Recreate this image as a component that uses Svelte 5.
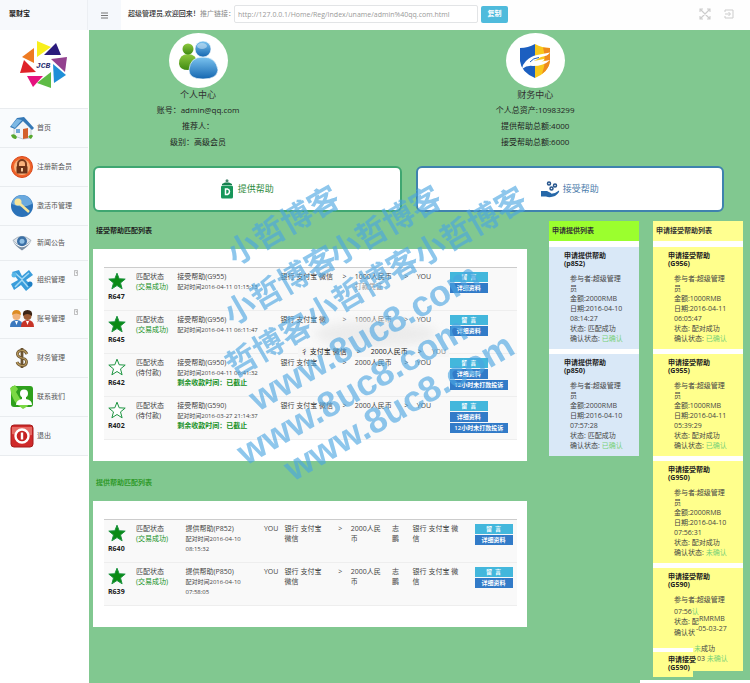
<script>
  const nav = [
    { id: 'home', label: '首页' },
    { id: 'lock', label: '注册新会员' },
    { id: 'key', label: '激活币管理' },
    { id: 'news', label: '新闻公告', short: true },
    { id: 'team', label: '组织管理', more: true },
    { id: 'users', label: '账号管理', more: true },
    { id: 'money', label: '财务管理' },
    { id: 'contact', label: '联系我们' },
    { id: 'exit', label: '退出' }
  ];

  const received = [
    { id: 'R647', done: true, code: 'G955', time: '2016-04-11 01:15:13', bank: '银行 支付宝 微信', amount: '1000人民币', proof: '打款凭证' },
    { id: 'R645', done: true, code: 'G956', time: '2016-04-11 06:11:47', bank: '银行 支付宝 微', amount: '1000人民币' },
    { id: 'R642', done: false, code: 'G950', time: '2016-04-11 06:41:32', bank: '银行 支付宝', amount: '2000人民币', late: true },
    { id: 'R402', done: false, code: 'G590', time: '2016-03-27 21:14:37', bank: '银行 支付宝 微信', amount: '2000人民币', late: true }
  ];

  const provided = [
    { id: 'R640', code: 'P852', date: '2016-04-10', time: '08:15:32' },
    { id: 'R639', code: 'P850', date: '2016-04-10', time: '07:58:05' }
  ];

  const offers = [
    { code: 'p852', amount: '2000RMB', date: '2016-04-10', time: '08:14:27', state: '匹配成功', ok: '已确认' },
    { code: 'p850', amount: '2000RMB', date: '2016-04-10', time: '07:57:28', state: '匹配成功', ok: '已确认' }
  ];

  const requests = [
    { code: 'G956', amount: '1000RMB', date: '2016-04-11', time: '06:05:47', state: '配对成功', ok: '已确认' },
    { code: 'G955', amount: '1000RMB', date: '2016-04-11', time: '05:39:29', state: '配对成功', ok: '已确认' },
    { code: 'G950', amount: '2000RMB', date: '2016-04-10', time: '07:56:31', state: '配对成功', ok: '未确认' }
  ];

  const marks = [
    { x: 235, y: 266, t: '小哲博客' },
    { x: 337, y: 266, t: '小哲博客' },
    { x: 422, y: 267, t: '小哲博客' },
    { x: 232, y: 326, t: '小哲博客' },
    { x: 314, y: 328, t: '小哲博客' },
    { x: 234, y: 378, t: '哲博客' }
  ];
  const urls = [
    { x: 258, y: 412 },
    { x: 246, y: 466 },
    { x: 293, y: 482 }
  ];

  const link = 'http://127.0.0.1/Home/Reg/Index/uname/admin%40qq.com.html';
</script>

{#snippet star(filled)}
  <svg class="star" viewBox="0 0 18 18" aria-hidden="true">
    <path d="M9 1.2 11.2 6.8 17.2 7.1 12.5 10.9 14.1 16.8 9 13.5 3.9 16.8 5.5 10.9 .8 7.1 6.8 6.8Z"
      fill={filled ? '#0a8a14' : '#fff'} stroke="#1c9440" stroke-width="1" stroke-linejoin="round" />
  </svg>
{/snippet}

{#snippet card(c, title)}
  <article class="card">
    <h3>{title}<br />({c.code})</h3>
    <div class="lines">
      参与者:超级管理<br />员<br />
      金额:{c.amount}<br />
      日期:{c.date}<br />{c.time}<br />
      状态: {c.state}<br />
      确认状态: <span class="ok">{c.ok}</span>
    </div>
  </article>
{/snippet}

<div class="page">
  <header>
    <div class="brand">聚财宝</div>
    <button class="burger" aria-label="菜单">
      <svg width="7" height="7" viewBox="0 0 7 7"><path d="M0 1h7M0 3.5h7M0 6h7" stroke="#777" stroke-width="1.1" /></svg>
    </button>
    <div class="bar">
      <b>超级管理员,欢迎回来！</b>
      <label for="ref">推广链接：</label>
      <input id="ref" type="text" value={link} readonly />
      <button class="copy">复制</button>
      <span class="tools">
        <svg width="12" height="12" viewBox="0 0 12 12" fill="none" stroke="#ccc" stroke-width="1.1">
          <path d="M1 4V1h3M8 1h3v3M11 8v3H8M4 11H1V8M1.500 1.500l9 9M10.500 1.500l-9 9" />
        </svg>
        <svg width="10" height="10" viewBox="0 0 10 10" fill="none" stroke="#ccc" stroke-width="1">
          <path d="M1 3V1h8v8H1V7M1 5h5M4.500 3l2 2-2 2" />
        </svg>
      </span>
    </div>
  </header>

  <div class="body">
    <aside>
      <div class="logo">
        <svg width="48" height="48" viewBox="0 0 48 48" aria-label="JCB">
          <path d="M17 0 31 6 17 16Z" fill="#f8ef1c" />
          <path d="M36 2 41 14 24 14Z" fill="#2a1a7c" />
          <path d="M47 16 45 31 31 18Z" fill="#93418f" />
          <path d="M33 23 46 34 34 42Z" fill="#1f8fd8" />
          <path d="M31 31 31 47 17 42Z" fill="#5fbb46" />
          <path d="M7 35 23 35 13 46Z" fill="#e5127f" />
          <path d="M4 19 16 31 0 32Z" fill="#df2229" />
          <path d="M14 7 14 22 2 16Z" fill="#ee7b22" />
          <text x="16" y="27" font-size="8" font-style="italic" font-weight="700" fill="#2b2f73" font-family="Liberation Mono">JCB</text>
        </svg>
      </div>
      <nav>
        {#each nav as n}
          <a href="#{n.id}" class:short={n.short}>
            <svg class="ico" viewBox="0 0 24 24" aria-hidden="true">
              {#if n.id === 'home'}
                <path d="M4 10 12 4 21 11V22L13 23 4 20Z" fill="#f2f4f6" stroke="#9fb0bd" stroke-width=".6" />
                <path d="M0 11 7 2 14 1 24 12 22 14 13 5 5 13Z" fill="#3578b6" />
                <path d="M1 10 7 3 12 4 5 12Z" fill="#7db8e4" />
                <path d="M13 13 18 12V22L13 23Z" fill="#d3602b" />
                <path d="M6 13h4v4H6z" fill="#6fa7d6" />
                <path d="M1 19q4-2 6 2l-1 2Q2 23 1 19ZM18 21q3-4 5-1l-2 3Z" fill="#57a82f" />
              {:else if n.id === 'lock'}
                <circle cx="12" cy="12" r="10.500" fill="#f0642a" stroke="#d9481c" />
                <circle cx="12" cy="12" r="8" fill="#f9b27c" />
                <path d="M8 12V9a4 4 0 0 1 8 0v3" fill="none" stroke="#7a3b1d" stroke-width="2" />
                <rect x="6.500" y="11" width="11" height="7.500" rx="1" fill="#6d3318" />
                <rect x="11" y="13" width="2" height="3.500" fill="#f7c99c" />
              {:else if n.id === 'key'}
                <circle cx="12" cy="12" r="11" fill="#2b72b8" />
                <path d="M2 10a10 9 0 0 1 20 0q-10 5-20 0Z" fill="#6aa9de" />
                <circle cx="8" cy="8" r="2.500" fill="#f7e59a" stroke="#f7e59a" stroke-width="2" />
                <path d="m9 9 10 9" stroke="#f7e59a" stroke-width="2.500" />
              {:else if n.id === 'news'}
                <path d="M1 9Q12-1 23 9 12 21 1 9Z" fill="#dfe4ea" stroke="#8a99a8" stroke-width=".8" />
                <path d="M1 10Q4 16 12 21 20 16 23 10 18 17 12 17 6 17 1 10Z" fill="#7c8fa3" />
                <circle cx="12" cy="10" r="6" fill="#3b6fa5" />
                <circle cx="12" cy="10" r="3" fill="#8fbfe4" />
              {:else if n.id === 'team'}
                <path d="M2 4 9 2 12 8 19 2 23 7 16 12 22 18 16 23 11 17 4 22 1 16 8 12Z" fill="#3a9ddb" />
                <path d="M5 5 12 11 19 5M5 19l7-7 6 7" fill="none" stroke="#a5daf5" stroke-width="1.500" />
                <circle cx="4" cy="7" r="2.500" fill="#57b7e8" /><circle cx="20" cy="16" r="2.500" fill="#1f7fc4" />
              {:else if n.id === 'users'}
                <path d="M0 20q0-7 6.500-7T13 20Z" fill="#3c79be" />
                <path d="M11 20q0-7 6.500-7T24 20Z" fill="#c73428" />
                <circle cx="6.500" cy="9" r="4" fill="#f0b27a" /><path d="M2 8q0-5 4.500-5T11 8Q6 5 2 8Z" fill="#dc8b23" />
                <circle cx="17.500" cy="9" r="4" fill="#9c5b34" /><path d="M13 9q-1-6 4.500-6T22 9Q17 5 13 9Z" fill="#3c2415" />
                <path d="M5 14h3l-1.500 4ZM16 14h3l-1.500 4Z" fill="#fff" />
              {:else if n.id === 'money'}
                <path d="M17 8Q15 4 11.500 4.500 7 5 7.500 8.500 8 11 12 12 17 13 16.500 16.500 16 20 11.500 19.500 8 19 7 16M12 2v20" fill="none" stroke="#6b5330" stroke-width="2.800" />
                <path d="M17 8Q15 4 11.500 4.500 7 5 7.500 8.500 8 11 12 12 17 13 16.500 16.500 16 20 11.500 19.500 8 19 7 16" fill="none" stroke="#b89a5c" stroke-width="1.200" />
              {:else if n.id === 'contact'}
                <rect x="1" y="1" width="22" height="21" rx="3" fill="#2fa01d" />
                <path d="M0 3 5 0l3 4-2 3 6 10 4-1 2 5-5 3Q2 18 0 3Z" fill="#7bd844" />
                <circle cx="14" cy="8.500" r="4" fill="#fff" /><path d="M6 20q0-5 6-6v-2h4v2q6 1 6 6Z" fill="#fff" />
              {:else}
                <rect x="1" y="1" width="22" height="22" rx="3" fill="#cf2a2a" stroke="#a51b1b" />
                <path d="M2 3h20v8Q12 13 2 10Z" fill="#e66a64" />
                <circle cx="12" cy="12" r="6.500" fill="#c62222" stroke="#fff" stroke-width="2.400" />
                <path d="M12 8.500v7" stroke="#fff" stroke-width="2.400" />
              {/if}
            </svg>
            <span>{n.label}</span>
            {#if n.more}
              <svg class="more" viewBox="0 0 4 6" aria-hidden="true"><path d="M.5.5h3v5h-3zM1.500 2h1v1.500" fill="none" stroke="#999" stroke-width=".6" /></svg>
            {/if}
          </a>
        {/each}
      </nav>
    </aside>

    <main>
      <section class="stats">
        <div class="stat">
          <div class="disc">
            <svg width="42" height="42" viewBox="0 0 42 42" aria-hidden="true">
              <defs>
                <linearGradient id="bl" x1="0" y1="0" x2="0" y2="1"><stop offset="0" stop-color="#7cc4f0" /><stop offset="1" stop-color="#1466b0" /></linearGradient>
                <linearGradient id="gr" x1="0" y1="0" x2="0" y2="1"><stop offset="0" stop-color="#8fc93f" /><stop offset="1" stop-color="#3f8a12" /></linearGradient>
              </defs>
              <path d="M2 24Q2 14 11 14T20 24Q19 30 11 30T2 24Z" fill="url(#gr)" />
              <circle cx="11" cy="9" r="5.500" fill="url(#gr)" />
              <path d="M12 30Q13 17 26 17T41 30Q40 39 26 39T12 30Z" fill="url(#bl)" stroke="#fff" stroke-width=".6" />
              <circle cx="26" cy="9" r="8" fill="url(#bl)" stroke="#fff" stroke-width=".6" />
              <ellipse cx="25" cy="6" rx="5" ry="3" fill="#fff" opacity=".4" />
            </svg>
          </div>
          <h2>个人中心</h2>
          <p>账号：admin@qq.com</p>
          <p>推荐人：</p>
          <p>级别：高级会员</p>
        </div>
        <div class="stat second">
          <div class="disc">
            <svg width="32" height="36" viewBox="0 0 32 36" aria-hidden="true">
              <path d="M16 1Q9 5 1 5V18Q2 29 16 35Z" fill="#1c5fc0" />
              <path d="M16 1Q23 5 31 5V18Q30 29 16 35Z" fill="#f9c81c" />
              <path d="M24 4.500 31 5V18Q30 26 23 31 28 18 24 4.500Z" fill="#ee8a1e" />
              <path d="M7 18Q12 13 18 12L31 9.500Q29 13 22 14L15 18 25 16Q26 18 20 19L31 17Q25 23 14 23 8 22 3 26L4 22Z" fill="#fff" />
              <path d="M11 19Q14 15 20 14.500" stroke="#1c5fc0" stroke-width="1" fill="none" />
            </svg>
          </div>
          <h2>财务中心</h2>
          <p>个人总资产:10983299</p>
          <p>提供帮助总额:4000</p>
          <p>接受帮助总额:6000</p>
        </div>
      </section>

      <section class="actions">
        <button class="give">
          <svg width="12" height="20" viewBox="0 0 12 20" aria-hidden="true">
            <circle cx="6" cy="1.800" r="1.500" fill="#4c8a72" />
            <path d="M1 6h10V5L8 3.500H4L1 5Z" fill="#16804e" />
            <rect x="0" y="6.500" width="12" height="13" rx="1.500" fill="#17965a" />
            <path d="M4.500 10H6.500Q8.500 10.500 8.500 12.500T6.500 15.500H4.500Z" fill="none" stroke="#fff" stroke-width="1.500" />
          </svg>
          提供帮助
        </button>
        <button class="take">
          <svg width="19" height="17" viewBox="0 0 19 17" aria-hidden="true">
            <g fill="none" stroke="#27568d" stroke-width="1.500">
              <circle cx="8" cy="2.500" r="1.500" /><circle cx="14" cy="4.500" r="1.500" /><circle cx="10.500" cy="7.500" r="1.500" />
            </g>
            <path d="M0 10H6L9 11.500Q12 13 9 13L14 12 18 9.500Q19 11 14 15 9 17 5 15.500H0Z" fill="#2567a8" />
          </svg>
          接受帮助
        </button>
      </section>

      <section class="content">
        <div class="lists">
          <h4>接受帮助匹配列表</h4>
          <div class="panel">
            <table class="t1">
              <colgroup>
                <col style="width:7%" /><col style="width:10%" /><col style="width:25%" /><col style="width:15%" /><col style="width:3%" /><col style="width:12%" /><col style="width:3%" /><col style="width:8%" /><col />
              </colgroup>
              <tbody>
                {#each received as r}
                  <tr>
                    <td class="id">{@render star(r.done)}<b>{r.id}</b></td>
                    <td>匹配状态<br /><span class:good={r.done}>({r.done ? '交易成功' : '待付款'})</span></td>
                    <td>接受帮助({r.code})<br /><small>配对时间{r.time}</small>
                      {#if r.late}<br /><b class="good">剩余收款时间：已截止</b>{/if}</td>
                    <td>{r.bank}</td>
                    <td>&gt;</td>
                    <td>{r.amount}{#if r.proof}<br /><span class="faint">{r.proof}</span>{/if}</td>
                    <td>&gt;</td>
                    <td>YOU</td>
                    <td class="btns">
                      <button class="msg">留 &nbsp;言</button>
                      <button>详细资料</button>
                      {#if r.late}<button class="wide">12小时未打款投诉</button>{/if}
                    </td>
                  </tr>
                {/each}
              </tbody>
            </table>
            <div class="smudge"></div>
            <div class="ghost"><span>彳 支付宝 微信</span><span>&gt;</span><span>2000人民币</span><span>&gt;</span><span class="fade">YOU</span></div>
          </div>

          <h4 class="green">提供帮助匹配列表</h4>
          <div class="panel low">
            <table class="t2">
              <colgroup>
                <col style="width:7%" /><col style="width:12%" /><col style="width:19%" /><col style="width:5%" /><col style="width:13%" /><col style="width:3%" /><col style="width:10%" /><col style="width:5%" /><col style="width:15%" /><col />
              </colgroup>
              <tbody>
                {#each provided as r}
                  <tr>
                    <td class="id">{@render star(true)}<b>{r.id}</b></td>
                    <td>匹配状态<br /><span class="good">(交易成功)</span></td>
                    <td>提供帮助({r.code})<br /><small>配对时间{r.date}<br />{r.time}</small></td>
                    <td>YOU</td>
                    <td>银行 支付宝<br />微信</td>
                    <td>&gt;</td>
                    <td>2000人民<br />币</td>
                    <td>志<br />鹏</td>
                    <td>银行 支付宝 微<br />信</td>
                    <td class="btns">
                      <button class="msg">留 &nbsp;言</button>
                      <button>详细资料</button>
                    </td>
                  </tr>
                {/each}
              </tbody>
            </table>
          </div>
        </div>

        <div class="col offers">
          <h4>申请提供列表</h4>
          {#each offers as c}{@render card(c, '申请提供帮助')}{/each}
        </div>

        <div class="col requests">
          <h4>申请接受帮助列表</h4>
          {#each requests as c}{@render card(c, '申请接受帮助')}{/each}
          <article class="card torn">
            <h3>申请接受帮助<br />(G590)</h3>
            <div class="lines">参与者:超级管理</div>
            <span style="left:21px;top:39px">07:56<i>认</i></span>
            <span style="left:21px;top:49px">状态: 配</span>
            <span style="left:46px;top:46px">RMRMB</span>
            <span style="left:21px;top:60px">确认状</span>
            <span style="left:43px;top:56px">-05-03-27</span>
            <span style="left:41px;top:76px"><i>未</i>成功</span>
            <span style="left:44px;top:86px">03 <i>未确认</i></span>
            <div class="flap"><h3>申请接受<br />(G590)</h3></div>
          </article>
        </div>
      </section>
      <div class="strip"></div>
    </main>
  </div>

  <svg class="mark" aria-hidden="true">
    <g class="cn">
      {#each marks as m}<text transform="translate({m.x} {m.y}) rotate(-30)">{m.t}</text>{/each}
    </g>
    <g class="url">
      {#each urls as u}<text transform="translate({u.x} {u.y}) rotate(-30)">www.8uc8.com</text>{/each}
    </g>
  </svg>
</div>

<style>
  :global(body) { background: #fff; }
  .page {
    position: relative;
    min-height: 100vh;
    display: flex;
    flex-direction: column;
    overflow: hidden;
    font: 7px/10px "Open Sans", "Noto Sans CJK SC", sans-serif;
    color: #444;
  }
  h2, h3, h4, p { margin: 0; }
  button, input { font: inherit; color: inherit; margin: 0; }
  svg { flex: none; }

  header { display: flex; height: 30px; background: #fefefe; }
  .brand {
    width: 88px; box-sizing: border-box; padding: 9px 9px 0;
    background: #f7f9fc; border-right: 1px solid #eceff3; color: #222; font-weight: 600;
  }
  .burger {
    width: 33px; padding: 0; border: 0; background: #f5f8fc;
    display: flex; align-items: center; justify-content: center;
  }
  .bar { flex: 1; display: flex; align-items: center; padding: 0 16px 2px 7px; }
  .bar b { width: 72px; color: #333; font-weight: 500; white-space: nowrap; }
  .bar label { width: 34px; color: #888; white-space: nowrap; }
  .bar input {
    width: 244px; height: 18px; box-sizing: border-box; padding: 0 3px; margin-right: 3px;
    border: 1px solid #e2e4e6; border-radius: 2px; background: #fff; color: #999;
  }
  .copy {
    width: 27px; height: 17px; padding: 0; border: 0; border-radius: 2px;
    background: #4fbbdc; color: #fff; font-weight: 700;
  }
  .tools { margin-left: auto; display: flex; align-items: center; gap: 13px; }

  .body { flex: 1; display: flex; }
  aside { width: 88px; flex: none; background: #fff; }
  .logo { height: 78px; display: flex; justify-content: center; padding-top: 11px; box-sizing: border-box; }
  nav { border-top: 1px solid #e9ecef; background: #f9fbfd; }
  nav a {
    position: relative; display: flex; align-items: center; gap: 3px; height: 39px;
    box-sizing: border-box; padding-left: 10px; border-bottom: 1px solid #e9ecef;
    color: #555; text-decoration: none;
  }
  nav a.short { height: 35px; }
  .ico { width: 24px; height: 24px; }
  .short .ico { width: 20px; height: 20px; margin: 0 2px; }
  .more { position: absolute; right: 10px; top: 9px; width: 4px; height: 6px; }

  main { position: relative; flex: 1; min-width: 0; margin-left: 1px; background: #81c890; }
  .stats { display: grid; grid-template-columns: 33% 18% 33%; height: 136px; box-sizing: border-box; padding-top: 3px; }
  .stat { text-align: center; font-size: 8px; line-height: 16px; color: #222; }
  .second { grid-column: 3; }
  .disc {
    width: 59px; height: 55px; border-radius: 50%; background: #fff; margin: 0 auto;
    display: flex; align-items: center; justify-content: center;
  }
  h2 { font-size: 9px; line-height: 14px; font-weight: 400; color: #333; }

  .actions { display: grid; grid-template-columns: 1fr 1fr; gap: 14px; padding: 0 26px 0 4px; }
  .actions button {
    height: 46px; border-radius: 6px; background: #fff; font-size: 9px; padding: 0;
    display: flex; align-items: center; justify-content: center; gap: 5px;
  }
  .actions .give { border: 2px solid #3fa671; color: #2d8a3c; }
  .actions .take { border: 2px solid #3f82ae; color: #4d7dab; gap: 3px; }

  .content { display: flex; align-items: flex-start; padding: 9px 7px 0 4px; }
  .lists { flex: 1; min-width: 0; margin-right: 22px; }
  h4 { font-size: 7px; line-height: 20px; color: #222; font-weight: 700; padding-left: 3px; }
  h4.green { margin-top: 12px; color: #2f9a2a; }
  .panel { position: relative; margin-top: 8px; background: #fff; padding: 18px 10px 21px 11px; }
  .panel.low { padding-top: 18px; }
  table { width: 100%; table-layout: fixed; border-collapse: collapse; border-top: 1px solid #ccc; }
  tr { height: 43px; background: #f9f9f9; border-bottom: 1px solid #eee; }
  td { padding: 4px 0 0 3px; vertical-align: top; white-space: nowrap; }
  td small { font-size: 6px; }
  .id { color: #222; padding-left: 4px; }
  .star { display: block; width: 18px; height: 18px; margin-bottom: 2px; }
  .good { color: #14901c; }
  .faint { color: #999; }
  .btns button {
    display: block; width: 38px; height: 10px; margin-bottom: 1px; padding: 0; border: 0;
    background: #327bc8; color: #fff; font-size: 6px; line-height: 10px; font-weight: 600;
  }
  .btns .msg { background: #43b7dc; }
  .btns .wide { width: 58px; }
  .smudge {
    position: absolute; left: 222px; top: 72px; width: 122px; height: 26px;
    border-radius: 50%; background: #ececec; filter: blur(5px);
  }
  .ghost {
    position: absolute; left: 205px; top: 98px; display: flex; gap: 10px; padding: 0 3px;
    background: #f6f6f6; color: #222;
  }
  .ghost .fade { color: #888; }

  .col { width: 90px; flex: none; background: #fff; }
  .col + .col { margin-left: 14px; }
  .col h4 { border-bottom: 6px solid #fff; color: #333; }
  .offers h4 { background: #9bff2e; }
  .requests h4 { background: #ffff90; }
  .card { position: relative; background: #d9e8f7; padding: 5px 0 5px 15px; border-bottom: 5px solid #fff; }
  .card:last-child { border-bottom: 0; }
  .requests .card { background: #ffff8c; }
  h3 { font-size: 7px; line-height: 8px; font-weight: 700; color: #222; }
  .lines { padding: 6px 0 0 6px; color: #444; white-space: nowrap; }
  .ok, i { color: #78d078; font-style: normal; }
  .torn { height: 93px; }
  .torn > span { position: absolute; white-space: nowrap; }
  .flap {
    position: absolute; left: 0; top: 80px; width: 40px; height: 29px; box-sizing: border-box;
    border-top: 4px solid #fff; background: #ffff8c; padding: 4px 0 0 15px; white-space: nowrap;
  }
  .strip { position: absolute; right: 0; bottom: 0; width: 110px; height: 3px; background: #fff; }

  .mark { position: absolute; left: 0; top: 0; width: 100%; height: 100%; pointer-events: none; fill: #4aa5e2; opacity: .62; }
  .cn { font: 700 31px "Noto Sans CJK SC", sans-serif; }
  .url { font: 700 36px "Liberation Sans", sans-serif; }
</style>
